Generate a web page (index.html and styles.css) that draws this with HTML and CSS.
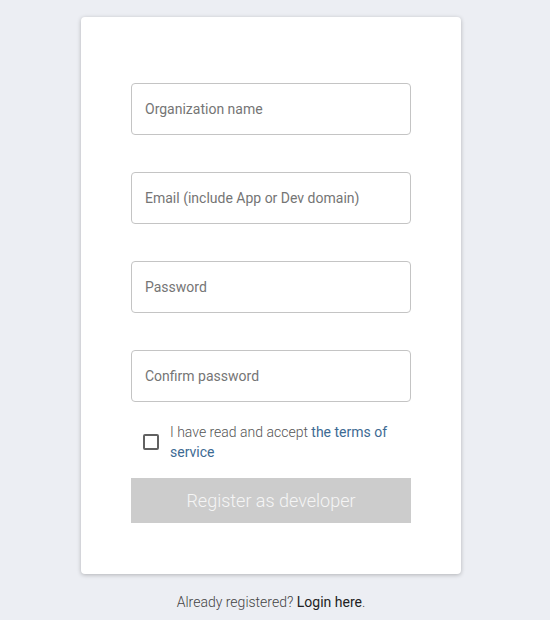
FILE: index.html
```html
<!DOCTYPE html>
<html>
<head>
<meta charset="utf-8">
<link rel="stylesheet" href="styles.css">
</head>
<body>
<div class="page">
  <form class="card">
    <div class="fields">
      <input class="field" type="text" placeholder="Organization name">
      <input class="field" type="text" placeholder="Email (include App or Dev domain)">
      <input class="field" type="password" placeholder="Password">
      <input class="field" type="password" placeholder="Confirm password">
    </div>
    <label class="terms">
      <span class="box"></span>
      <span class="terms-text">I have read and accept <a class="link" href="#">the terms of service</a></span>
    </label>
    <button class="submit" type="button" disabled>Register as developer</button>
  </form>
  <p class="footer">Already registered? <a class="login" href="#">Login here</a>.</p>
</div>
</body>
</html>
```

FILE: styles.css
```css
html, body {
  margin: 0;
  padding: 0;
  background: #eceef3;
  font-family: Roboto, "Noto Sans", sans-serif;
}
.page {
  display: flex;
  flex-direction: column;
  align-items: center;
  padding: 17px 8px 0 0;
}
.card {
  width: 380px;
  box-sizing: border-box;
  background: #fff;
  border-radius: 4px;
  box-shadow: 0 1px 4px rgba(0,0,0,0.25);
  padding: 66px 50px 51px;
  display: flex;
  flex-direction: column;
}
.fields {
  display: flex;
  flex-direction: column;
  gap: 37px;
}
.field {
  height: 52px;
  box-sizing: border-box;
  border: 1px solid #c4c4c4;
  border-radius: 4px;
  padding: 0 13px;
  font-family: Roboto, sans-serif;
  font-size: 14px;
  color: #333;
  outline: none;
}
.field::placeholder {
  color: #757575;
}
.terms {
  display: flex;
  align-items: center;
  margin-top: 20px;
  padding-left: 12px;
  gap: 11px;
}
.box {
  width: 16px;
  height: 16px;
  box-sizing: border-box;
  border: 2px solid #616161;
  border-radius: 2px;
  flex-shrink: 0;
}
.terms-text {
  font-size: 14px;
  line-height: 20px;
  color: #555;
  font-weight: 300;
}
.link {
  color: #3d6a93;
  text-decoration: none;
  font-weight: 400;
}
.submit {
  margin-top: 16px;
  height: 45px;
  border: none;
  background: #cccccc;
  color: #f5f5f5;
  font-family: Roboto, sans-serif;
  font-size: 18px;
  font-weight: 300;
}
.footer {
  margin: 20px 0 0;
  font-size: 14px;
  color: #444;
  font-weight: 300;
}
.login {
  color: #222;
  text-decoration: none;
  font-weight: 400;
}
```
